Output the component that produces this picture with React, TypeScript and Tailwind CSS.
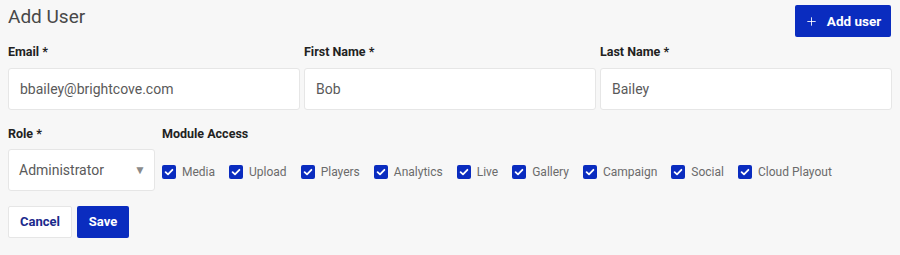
import { Plus } from 'lucide-react';

const MODULES = ['Media', 'Upload', 'Players', 'Analytics', 'Live', 'Gallery', 'Campaign', 'Social', 'Cloud Playout'];

const FIELDS = [
  { label: 'Email *', value: 'bbailey@brightcove.com' },
  { label: 'First Name *', value: 'Bob' },
  { label: 'Last Name *', value: 'Bailey' },
];

function Check({ label }: { label: string }) {
  return (
    <label className="flex items-center gap-[6px]">
      <span className="flex h-[14px] w-[14px] items-center justify-center rounded-[2px] bg-[#0a2cbf]">
        <svg viewBox="0 0 14 14" className="h-[14px] w-[14px]">
          <path d="M3.6 7.2 6 9.4 10.4 4.8" fill="none" stroke="#fff" strokeWidth="1.8" strokeLinecap="round" strokeLinejoin="round" />
        </svg>
      </span>
      <span className="text-[12px] text-[#6b6b6b]">{label}</span>
    </label>
  );
}

export default function App() {
  return (
    <div className="h-[255px] w-[900px] bg-[#f7f7f7] px-2 pt-[5px] font-['Roboto',sans-serif]">
      <div className="flex h-8 items-start justify-between">
        <h1 className="text-[19px] leading-[24px] text-[#484848]">Add User</h1>
        <button
          type="button"
          className="mr-[1px] flex h-8 w-[96px] items-center justify-center gap-[9px] rounded-[2px] bg-[#0a2cbf] text-[13.5px] font-bold text-white"
        >
          <Plus className="h-[13px] w-[13px]" strokeWidth={1.6} />
          Add user
        </button>
      </div>

      <div className="mt-[6px] grid grid-cols-3 gap-1">
        {FIELDS.map((field) => (
          <div key={field.label}>
            <div className="mb-[7px] text-[12.5px] leading-[18px] font-bold text-[#222]">{field.label}</div>
            <div className="flex h-[42px] items-center rounded-[3px] border border-[#e6e6e6] bg-white pl-[11px] text-[14px] text-[#5a5a5a]">
              {field.value}
            </div>
          </div>
        ))}
      </div>

      <div className="mt-[15px] flex gap-[7px]">
        <div className="w-[147px]">
          <div className="mb-[6px] text-[12.5px] leading-[18px] font-bold text-[#222]">Role *</div>
          <div className="flex h-[42px] items-center justify-between rounded-[3px] border border-[#e6e6e6] bg-white pl-[10px] pr-[8px] text-[14px] text-[#5a5a5a]">
            Administrator
            <span className="text-[12px] text-[#8a8a8a]">▼</span>
          </div>
        </div>
        <div>
          <div className="mb-[6px] text-[12.5px] leading-[18px] font-bold text-[#222]">Module Access</div>
          <div className="flex h-[42px] items-center gap-[14px] pt-[3px]">
            {MODULES.map((m) => (
              <Check key={m} label={m} />
            ))}
          </div>
        </div>
      </div>

      <div className="mt-[15px] flex gap-[5px]">
        <button type="button" className="h-8 w-[64px] rounded-[2px] border border-[#e6e6e6] bg-white text-[13px] font-bold text-[#1b2a8c]">
          Cancel
        </button>
        <button type="button" className="h-8 w-[52px] rounded-[2px] bg-[#0a2cbf] text-[13px] font-bold text-white">
          Save
        </button>
      </div>
    </div>
  );
}
